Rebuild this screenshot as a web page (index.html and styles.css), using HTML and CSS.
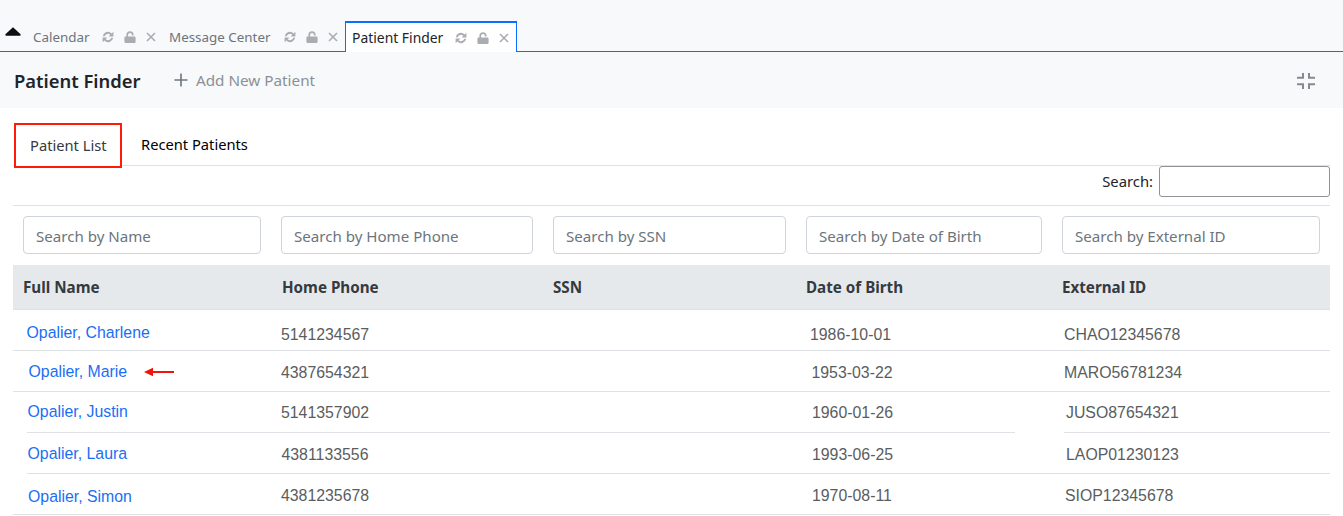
FILE: index.html
```html
<!DOCTYPE html>
<html lang="en">
<head>
<meta charset="utf-8">
<title>Patient Finder</title>
<link rel="stylesheet" href="styles.css">
</head>
<body>
<svg class="defs" width="0" height="0" aria-hidden="true">
  <symbol id="i-sync" viewBox="0 0 12 12">
    <path d="M0.8 5.2A5.2 5.2 0 0 1 9.6 2.4L11.4 0.8V5.6H6.6L8.3 3.8A3.4 3.4 0 0 0 2.7 5.2Z"/>
    <path d="M11.2 6.8A5.2 5.2 0 0 1 2.4 9.6L0.6 11.2V6.4H5.4L3.7 8.2A3.4 3.4 0 0 0 9.3 6.8Z"/>
  </symbol>
  <symbol id="i-lock" viewBox="0 0 12 12">
    <path d="M2.4 5.5V3.8A3.6 3.6 0 0 1 9.6 3.8V4.4H7.9V3.8A1.9 1.9 0 0 0 4.1 3.8V5.5H10.4A1.2 1.2 0 0 1 11.6 6.7V10.8A1.2 1.2 0 0 1 10.4 12H1.6A1.2 1.2 0 0 1 0.4 10.8V6.7A1.2 1.2 0 0 1 1.6 5.5Z"/>
  </symbol>
  <symbol id="i-x" viewBox="0 0 12 12">
    <path d="M1 2L9 10M9 2L1 10" fill="none" stroke="currentColor" stroke-width="1.6"/>
  </symbol>
</svg>
<nav class="tabbar">
  <svg class="logo" viewBox="0 0 16 9"><path d="M8 0.3L15.6 7.2Q16 8.8 14.6 8.8H1.4Q0 8.8 0.4 7.2Z"/></svg>
  <div class="wintab wintab-cal">
    <span class="wintab-label">Calendar</span>
    <svg class="ti"><use href="#i-sync"/></svg><svg class="ti"><use href="#i-lock"/></svg><svg class="ti ti-x"><use href="#i-x"/></svg>
  </div>
  <div class="wintab wintab-msg">
    <span class="wintab-label">Message Center</span>
    <svg class="ti"><use href="#i-sync"/></svg><svg class="ti"><use href="#i-lock"/></svg><svg class="ti ti-x"><use href="#i-x"/></svg>
  </div>
  <div class="wintab wintab-active">
    <span class="wintab-label">Patient Finder</span>
    <svg class="ti"><use href="#i-sync"/></svg><svg class="ti"><use href="#i-lock"/></svg><svg class="ti ti-x"><use href="#i-x"/></svg>
  </div>
</nav>
<header class="pagehead">
  <h1 class="pagetitle">Patient Finder</h1>
  <a class="addnew"><svg class="plus" viewBox="0 0 14 14"><path d="M7 0.5V13.5M0.5 7H13.5" fill="none" stroke="currentColor" stroke-width="1.6"/></svg>Add New Patient</a>
  <svg class="compress" viewBox="0 0 18 16"><path d="M6 0V4.8H0M12 0V4.8H18M6 16V11.2H0M12 16V11.2H18" fill="none" stroke="currentColor" stroke-width="2"/></svg>
</header>
<main class="content">
  <div class="tabs">
    <a class="tab tab-on">Patient List</a>
    <a class="tab">Recent Patients</a>
  </div>
  <div class="searchrow">
    <label class="searchlabel" for="q">Search:</label>
    <input class="searchinput" id="q" type="text">
  </div>
  <div class="row filters">
    <div class="fcell"><input class="finput" placeholder="Search by Name"></div>
    <div class="fcell"><input class="finput" placeholder="Search by Home Phone"></div>
    <div class="fcell"><input class="finput" placeholder="Search by SSN"></div>
    <div class="fcell"><input class="finput" placeholder="Search by Date of Birth"></div>
    <div class="fcell"><input class="finput" placeholder="Search by External ID"></div>
  </div>
  <div class="row thead">
    <div>Full Name</div><div>Home Phone</div><div>SSN</div><div>Date of Birth</div><div>External ID</div>
  </div>
  <div class="row tr r1">
    <div class="td name"><a>Opalier, Charlene</a></div><div class="td phone">5141234567</div><div class="td"></div><div class="td dob">1986-10-01</div><div class="td ext">CHAO12345678</div>
  </div>
  <div class="row tr r2">
    <div class="td name"><a>Opalier, Marie</a><svg class="arrow" viewBox="0 0 30 10"><path d="M0 5L9 0.8V4H30V6H9V9.2Z"/></svg></div><div class="td phone">4387654321</div><div class="td"></div><div class="td dob">1953-03-22</div><div class="td ext">MARO56781234</div>
  </div>
  <div class="row tr r3">
    <div class="td name"><a>Opalier, Justin</a></div><div class="td phone">5141357902</div><div class="td"></div><div class="td dob">1960-01-26</div><div class="td ext">JUSO87654321</div>
  </div>
  <div class="row tr r4">
    <div class="td name"><a>Opalier, Laura</a></div><div class="td phone">4381133556</div><div class="td"></div><div class="td dob">1993-06-25</div><div class="td ext">LAOP01230123</div>
  </div>
  <div class="row tr r5">
    <div class="td name"><a>Opalier, Simon</a></div><div class="td phone">4381235678</div><div class="td"></div><div class="td dob">1970-08-11</div><div class="td ext">SIOP12345678</div>
  </div>
</main>
</body>
</html>
```
FILE: styles.css
```css
* { box-sizing: border-box; }
html, body { margin: 0; padding: 0; }
body {
  background: #fff;
  font-family: "Noto Sans", sans-serif;
  color: #212529;
  height: 516px;
  overflow: hidden;
}
.defs { display: block; height: 0; }

.tabbar {
  height: 52px;
  background: #f8f9fa;
  border-bottom: 1px solid #0d6efd;
  display: flex;
  align-items: flex-end;
  padding-left: 5px;
}
.logo { width: 16px; height: 9px; fill: #0b0f14; margin-bottom: 15px; }
.wintab {
  height: 28px;
  display: flex;
  align-items: center;
  font-size: 13.4px;
  color: #6c757d;
  flex: none;
}
.wintab-cal { width: 148px; padding-left: 12px; }
.wintab-msg { width: 176px; padding-left: 0; }
.wintab-active {
  width: 172px;
  height: 31px;
  margin-bottom: -1px;
  padding-left: 6px;
  background: #fff;
  border: 1px solid #0d6efd;
  border-bottom: 0;
  border-top-width: 2px;
  color: #212529;
  font-size: 13.9px;
}
.wintab-cal .wintab-label { width: 69px; }
.wintab-msg .wintab-label { width: 115px; }
.wintab-active .wintab-label { width: 103px; }
.wintab-label { white-space: nowrap; flex: none; }
.ti { width: 12px; height: 12px; fill: #a9adb2; color: #a9adb2; margin-right: 10px; flex: none; }

.pagehead {
  height: 56px;
  background: #f8f9fa;
  display: flex;
  align-items: center;
  padding: 0 28px 0 14px;
}
.pagetitle { font-size: 18.4px; font-weight: 600; margin: 0; color: #212529; width: 160px; }
.addnew { display: flex; align-items: center; font-size: 15.25px; color: #8a9096; }
.plus { width: 14px; height: 14px; color: #6c757d; margin-right: 8px; }
.compress { width: 18px; height: 16px; margin-left: auto; margin-top: 1px; color: #868a8f; }

.content { padding: 15px 13px 0; }
.tabs {
  display: flex;
  height: 43px;
  border-bottom: 1px solid #dee2e6;
}
.tab {
  font-size: 14.7px;
  height: 45px;
  padding-top: 11px;
  color: #000;
}
.tab:first-child { margin-left: 1px; width: 108px; color: #343a40; border: 2px solid #ff1a0a; padding-left: 14px; padding-top: 10px; background: #fff; }
.tab:last-child { margin-left: 19px; }
.searchrow {
  height: 40px;
  border-bottom: 1px solid #dee2e6;
  display: flex;
  justify-content: flex-end;
  gap: 6px;
  font-size: 14.8px;
}
.searchlabel { padding-top: 5px; }
.searchinput { width: 171px; height: 31px; border: 1px solid #8f9296; border-radius: 3px; background: #fff; }

.row { display: grid; grid-template-columns: 258px 272px 253px 256px 278px; }
.filters { height: 59px; padding-top: 10px; }
.fcell { padding: 0 10px; }
.finput {
  width: 100%;
  height: 38px;
  border: 1px solid #ced4da;
  border-radius: 4px;
  padding: 1px 12px 0;
  font: 15.1px "Noto Sans", sans-serif;
  color: #6c757d;
}
.finput::placeholder { color: #6c757d; opacity: 1; }
.thead {
  height: 45px;
  background: #e6e9ec;
  border-bottom: 1px solid #dee2e6;
  font-size: 15.2px;
  font-weight: 700;
  color: #343a40;
  align-items: center;
}
.thead > div { padding-left: 10px; }
.thead > div:nth-child(2) { padding-left: 11px; }
.tr { height: 41px; font: 15.85px/20px "Liberation Sans", sans-serif; color: #5a5d60; }
.td { border-bottom: 1px solid #dee2e6; white-space: nowrap; }
.name a { color: #1a6ef5; }
.arrow { width: 30px; height: 10px; fill: #f0140a; margin-left: 17px; }

.phone { padding-left: 10px; }
.dob { padding-left: 14px; }
.ext { padding-left: 12px; }

.r1 .td { padding-top: 15px; }
.r1 .name { padding-left: 13.5px; padding-top: 13px; }
.r2 .td { padding-top: 12px; }
.r2 .name { padding-left: 15.5px; padding-top: 11px; }
.r2 .dob { padding-left: 15.5px; }
.r3 .td { padding-top: 11px; }
.r3 .name { padding-left: 0.5px; margin-left: 14px; padding-top: 10px; }
.r3 .dob { padding-left: 16px; margin-right: 37px; }
.r3 .ext { padding-left: 2px; margin-left: 12px; }
.r4 .td { padding-top: 12px; }
.r4 .name { padding-left: 0.5px; margin-left: 14px; padding-top: 11px; }
.r4 .phone { padding-left: 10.5px; }
.r4 .dob { padding-left: 16px; }
.r4 .ext { padding-left: 14px; }
.r5 .td { padding-top: 12px; }
.r5 .name { padding-left: 15px; padding-top: 13px; }
.r5 .dob { padding-left: 16px; }
.r5 .ext { padding-left: 13px; }
```
